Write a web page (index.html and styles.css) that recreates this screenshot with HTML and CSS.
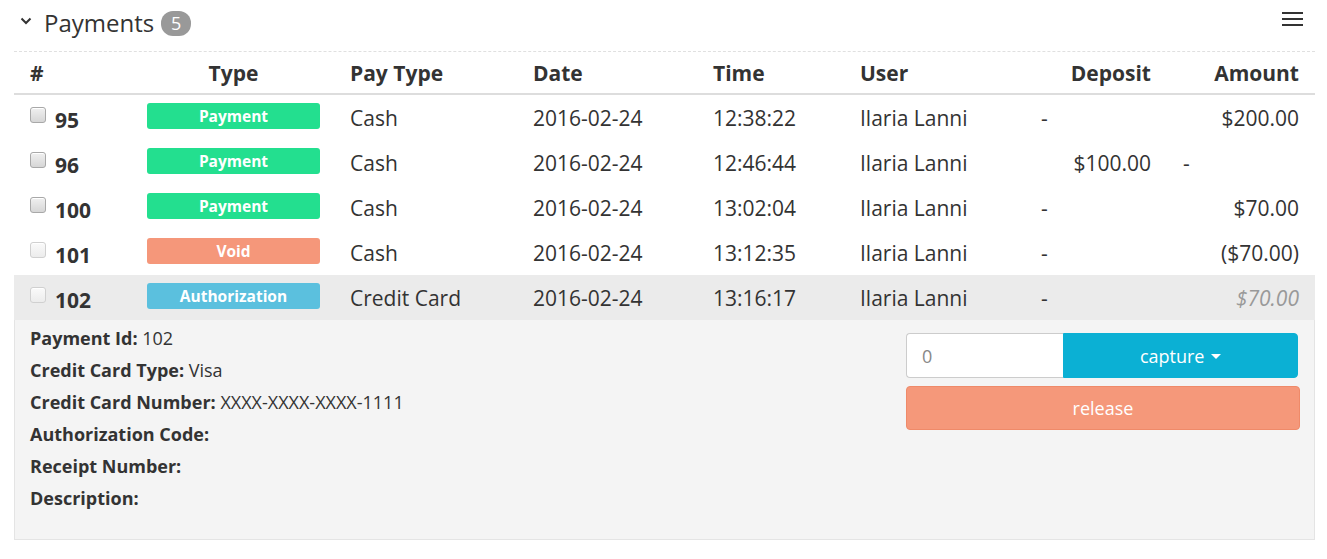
FILE: index.html
```html
<!DOCTYPE html>
<html>
<head>
<meta charset="utf-8">
<link rel="stylesheet" href="styles.css">
</head>
<body>
<div class="panel">
  <div class="panel-head">
    <div class="title">
      <svg class="chev" width="12" height="8" viewBox="0 0 12 8"><path d="M1.5 1.5 L6 6 L10.5 1.5" fill="none" stroke="#333" stroke-width="2"/></svg>
      <span class="title-text">Payments</span>
      <span class="badge">5</span>
    </div>
    <svg class="menu" width="22" height="16" viewBox="0 0 22 16"><rect x="0" y="1" width="21" height="2" fill="#333"/><rect x="0" y="7" width="21" height="2" fill="#333"/><rect x="0" y="13" width="21" height="2" fill="#333"/></svg>
  </div>
  <table class="grid">
    <colgroup>
      <col class="c-num"><col class="c-type"><col class="c-pay"><col class="c-date"><col class="c-time"><col class="c-user"><col class="c-dep"><col class="c-amt">
    </colgroup>
    <thead>
      <tr>
        <th>#</th><th class="center">Type</th><th>Pay Type</th><th>Date</th><th>Time</th><th>User</th><th class="right">Deposit</th><th class="right">Amount</th>
      </tr>
    </thead>
    <tbody>
      <tr>
        <td><span class="cb"></span><span class="num">95</span></td>
        <td class="tcell"><span class="lbl green">Payment</span></td>
        <td>Cash</td><td>2016-02-24</td><td>12:38:22</td><td>Ilaria Lanni</td>
        <td>-</td><td class="right">$200.00</td>
      </tr>
      <tr>
        <td><span class="cb"></span><span class="num">96</span></td>
        <td class="tcell"><span class="lbl green">Payment</span></td>
        <td>Cash</td><td>2016-02-24</td><td>12:46:44</td><td>Ilaria Lanni</td>
        <td class="right">$100.00</td><td>-</td>
      </tr>
      <tr>
        <td><span class="cb"></span><span class="num">100</span></td>
        <td class="tcell"><span class="lbl green">Payment</span></td>
        <td>Cash</td><td>2016-02-24</td><td>13:02:04</td><td>Ilaria Lanni</td>
        <td>-</td><td class="right">$70.00</td>
      </tr>
      <tr>
        <td><span class="cb off"></span><span class="num">101</span></td>
        <td class="tcell"><span class="lbl red">Void</span></td>
        <td>Cash</td><td>2016-02-24</td><td>13:12:35</td><td>Ilaria Lanni</td>
        <td>-</td><td class="right">($70.00)</td>
      </tr>
      <tr class="active">
        <td><span class="cb off"></span><span class="num">102</span></td>
        <td class="tcell"><span class="lbl blue">Authorization</span></td>
        <td>Credit Card</td><td>2016-02-24</td><td>13:16:17</td><td>Ilaria Lanni</td>
        <td>-</td><td class="right muted">$70.00</td>
      </tr>
      <tr class="detail-row">
        <td colspan="8">
          <div class="detail">
            <div class="info">
              <div><b>Payment Id:</b> 102</div>
              <div><b>Credit Card Type:</b> Visa</div>
              <div><b>Credit Card Number:</b> XXXX-XXXX-XXXX-1111</div>
              <div><b>Authorization Code:</b></div>
              <div><b>Receipt Number:</b></div>
              <div><b>Description:</b></div>
            </div>
            <div class="actions">
              <div class="group">
                <input class="amt-input" type="text" value="0">
                <button class="btn capture">capture <span class="caret"></span></button>
              </div>
              <button class="btn release">release</button>
            </div>
          </div>
        </td>
      </tr>
    </tbody>
  </table>
</div>
</body>
</html>
```

FILE: styles.css
```css
html, body {
  margin: 0;
  padding: 0;
  background: #fff;
}
body {
  font-family: "Open Sans", "Liberation Sans", sans-serif;
  color: #333;
  font-size: 21px;
}
.panel {
  margin: 0 12px 0 14px;
}
.panel-head {
  height: 52px;
  border-bottom: 1px dashed #e0e0e0;
  display: flex;
  align-items: center;
  justify-content: space-between;
  padding: 0 11px 6px 6px;
  box-sizing: border-box;
}
.title {
  display: flex;
  align-items: center;
}
.chev {
  margin-right: 12px;
  margin-top: -4px;
}
.title-text {
  font-size: 24px;
  line-height: 30px;
}
.badge {
  display: inline-block;
  background: #999;
  color: #fff;
  font-size: 18px;
  line-height: 25px;
  height: 25px;
  min-width: 30px;
  text-align: center;
  border-radius: 12px;
  margin-left: 7px;
  margin-top: 2px;
}
.menu {
  margin-top: -7px;
}
.grid {
  width: 100%;
  border-collapse: collapse;
  table-layout: fixed;
}
.c-num { width: 117px; }
.c-type { width: 203px; }
.c-pay { width: 183px; }
.c-date { width: 180px; }
.c-time { width: 147px; }
.c-user { width: 181px; }
.c-dep { width: 142px; }
.c-amt { width: 148px; }
th {
  font-weight: 700;
  text-align: left;
  height: 41px;
  padding: 0 16px;
  border-bottom: 2px solid #ddd;
  vertical-align: middle;
  white-space: nowrap;
}
td {
  height: 45px;
  padding: 0 16px;
  vertical-align: middle;
  white-space: nowrap;
}
.center { text-align: center; }
th.center { padding: 0 14px 0 16px; }
.right { text-align: right; }
.muted { color: #999; font-style: italic; }
.tcell { padding: 0 14px 0 16px; }
.lbl {
  display: block;
  height: 26px;
  line-height: 26px;
  border-radius: 3px;
  color: #fff;
  font-weight: 700;
  font-size: 15.5px;
  text-align: center;
  margin-top: -4px;
}
.green { background: #23df8f; }
.red { background: #f5977a; }
.blue { background: #5bc0de; }
.cb {
  display: inline-block;
  width: 14px;
  height: 14px;
  border: 1px solid #a8a8a8;
  border-radius: 3px;
  background: linear-gradient(#f0f0f0, #d6d6d6);
  vertical-align: middle;
  margin-right: 9px;
  margin-top: -6px;
  box-shadow: inset 0 1px 0 #fff;
}
.cb.off {
  border-color: #d0d0d0;
  background: linear-gradient(#fafafa, #ececec);
}
.num {
  font-weight: 700;
  display: inline-block;
  vertical-align: middle;
  margin-top: 4px;
}
tr.active td { background: #ebebeb; }
.detail-row td {
  padding: 0;
  height: auto;
}
.detail {
  background: #f4f4f4;
  border: 1px solid #e4e4e4;
  border-top: none;
  display: flex;
  justify-content: space-between;
  align-items: flex-start;
  padding: 2px 14px 25px 15px;
  font-size: 18px;
  line-height: 32px;
}
.info b { font-weight: 700; }
.actions {
  width: 394px;
  margin-top: 11px;
  display: flex;
  flex-direction: column;
  gap: 8px;
}
.group {
  display: flex;
  height: 45px;
}
.amt-input {
  width: 157px;
  box-sizing: border-box;
  height: 45px;
  border: 1px solid #ccc;
  border-right: none;
  border-radius: 4px 0 0 4px;
  background: #fff;
  font-family: "Open Sans", "Liberation Sans", sans-serif;
  font-size: 18px;
  color: #888;
  padding: 0 15px;
  margin: 0;
  outline: none;
}
.btn {
  font-family: "Open Sans", "Liberation Sans", sans-serif;
  font-size: 18px;
  color: #fff;
  border: 1px solid transparent;
  cursor: pointer;
  margin: 0;
}
.capture {
  flex: 1;
  height: 45px;
  background: #0bb0d4;
  border-color: #0bb0d4;
  border-radius: 0 4px 4px 0;
  margin-right: 2px;
}
.caret {
  display: inline-block;
  width: 0;
  height: 0;
  border-left: 5px solid transparent;
  border-right: 5px solid transparent;
  border-top: 5px solid #fff;
  vertical-align: middle;
  margin-left: 2px;
  margin-top: -2px;
}
.release {
  height: 44px;
  background: #f5987a;
  border-color: #ef8a69;
  border-radius: 4px;
  width: 100%;
}
```
